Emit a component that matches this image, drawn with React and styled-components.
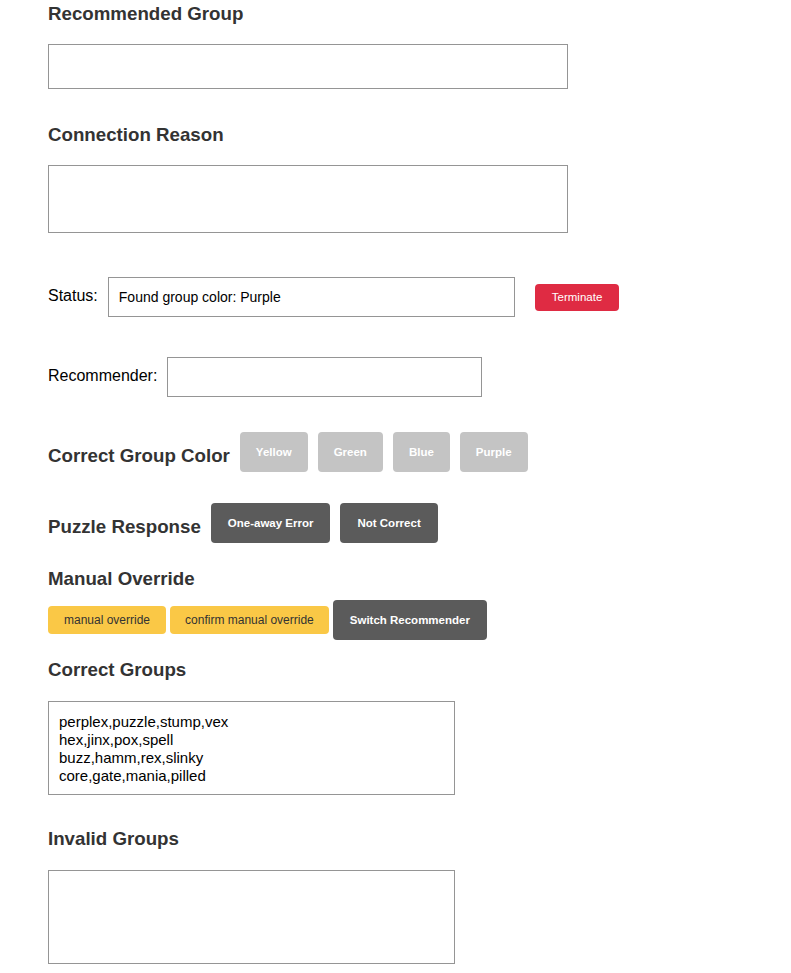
import styled, { createGlobalStyle } from "styled-components";

const GlobalStyle = createGlobalStyle`
    body {
        margin: 0;
        background: #ffffff;
        font-family: "Liberation Sans", Arial, sans-serif;
        color: #000;
    }
`

const Page = styled.div`
    display: flex;
    flex-direction: column;
    align-items: flex-start;
    padding: 3px 0 0 48px;
`

const Heading = styled.h3`
    margin: ${props => props.$mt || 0}px 0 0 0;
    font-size: 18.72px;
    line-height: 22px;
    font-weight: bold;
    color: #333333;
    white-space: nowrap;
`

const RowHeading = styled(Heading)`
    margin-top: 8px;
`

const Box = styled.input`
    box-sizing: border-box;
    margin-top: ${props => props.$mt || 0}px;
    width: ${props => props.$w}px;
    height: ${props => props.$h}px;
    border: 1px solid #959595;
    padding: 0 10px;
    font-family: "Liberation Sans", Arial, sans-serif;
    font-size: 14px;
    color: #000;
    outline: none;
`

const Area = styled.textarea`
    box-sizing: border-box;
    display: block;
    margin-top: ${props => props.$mt || 0}px;
    width: ${props => props.$w}px;
    height: ${props => props.$h}px;
    border: 1px solid #959595;
    padding: 11px 10px;
    font-family: "Liberation Sans", Arial, sans-serif;
    font-size: 15px;
    line-height: 18px;
    color: #000;
    resize: none;
    overflow: hidden;
    outline: none;
`

const Row = styled.div`
    display: flex;
    align-items: center;
    gap: ${props => props.$gap ?? 10}px;
    margin-top: ${props => props.$mt || 0}px;
`

const Label = styled.span`
    font-size: 16px;
    color: #000;
    margin-top: -3px;
`

const Button = styled.button`
    box-sizing: border-box;
    height: ${props => props.$h || 40}px;
    padding: 0 ${props => props.$px || 17}px;
    margin-left: ${props => props.$ml || 0}px;
    border: none;
    border-radius: 4px;
    background: ${props => props.$bg};
    color: ${props => props.$fg || "#ffffff"};
    font-family: "Liberation Sans", Arial, sans-serif;
    font-size: ${props => props.$fs || 11.5}px;
    font-weight: ${props => props.$bold ? "bold" : "normal"};
    white-space: nowrap;
    cursor: pointer;
`

const colors = ["Yellow", "Green", "Blue", "Purple"]

const correct = `perplex,puzzle,stump,vex
hex,jinx,pox,spell
buzz,hamm,rex,slinky
core,gate,mania,pilled`

export default function App() {
    return (
        <>
            <GlobalStyle />
            <Page>
                <Heading>Recommended Group</Heading>
                <Box $mt={19} $w={520} $h={45} readOnly />

                <Heading $mt={35}>Connection Reason</Heading>
                <Area $mt={19} $w={520} $h={68} readOnly />

                <Row $mt={44}>
                    <Label>Status:</Label>
                    <Box $w={407} $h={40} defaultValue="Found group color: Purple" readOnly />
                    <Button $bg="#df2b43" $h={27} $ml={10}>Terminate</Button>
                </Row>

                <Row $mt={40}>
                    <Label>Recommender:</Label>
                    <Box $w={315} $h={40} readOnly />
                </Row>

                <Row $mt={35}>
                    <RowHeading>Correct Group Color</RowHeading>
                    {colors.map(c => (
                        <Button key={c} $bg="#c4c4c4" $bold $px={16}>{c}</Button>
                    ))}
                </Row>

                <Row $mt={31}>
                    <RowHeading>Puzzle Response</RowHeading>
                    <Button $bg="#5b5b5b" $bold>One-away Error</Button>
                    <Button $bg="#5b5b5b" $bold>Not Correct</Button>
                </Row>

                <Heading $mt={25}>Manual Override</Heading>
                <Row $mt={10} $gap={4}>
                    <Button $bg="#fac846" $fg="#333333" $h={28} $px={16} $fs={12}>manual override</Button>
                    <Button $bg="#fac846" $fg="#333333" $h={28} $px={15} $fs={12}>confirm manual override</Button>
                    <Button $bg="#5b5b5b" $bold>Switch Recommender</Button>
                </Row>

                <Heading $mt={19}>Correct Groups</Heading>
                <Area $mt={20} $w={407} $h={94} defaultValue={correct} readOnly />

                <Heading $mt={33}>Invalid Groups</Heading>
                <Area $mt={20} $w={407} $h={94} readOnly />
            </Page>
        </>
    )
}
